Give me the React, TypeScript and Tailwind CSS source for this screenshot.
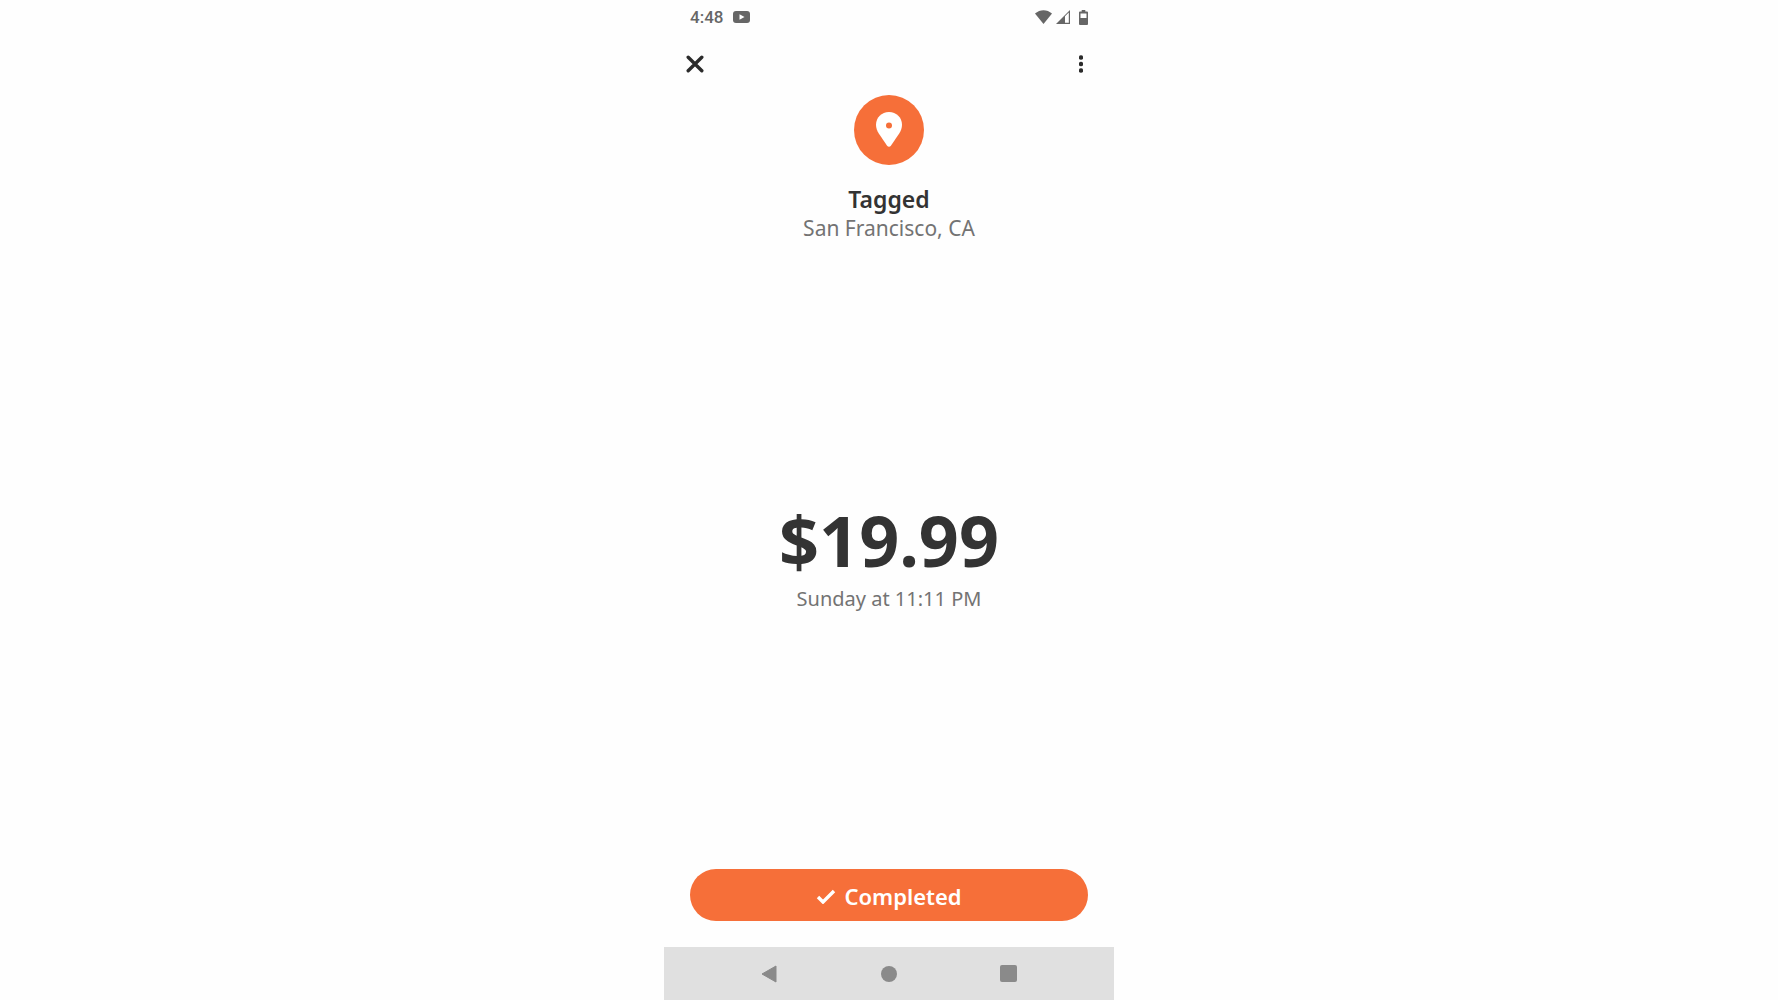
import React from "react";

function StatusBar() {
  return (
    <div className="flex h-8 items-center justify-between px-[26px] pt-0.5 text-[#666666]">
      <div className="flex items-center gap-2.5">
        <span className="font-['Roboto',sans-serif] text-[17px] leading-5 font-medium">
          4:48
        </span>
        <svg width="17" height="12" viewBox="0 0 17 12" aria-hidden="true">
          <rect width="17" height="12" rx="3" fill="currentColor" />
          <path d="M6.5 3.2v5.6L11.5 6z" fill="#fff" />
        </svg>
      </div>
      <div className="flex items-center">
        <svg width="17" height="14" viewBox="0 0 17 14" aria-hidden="true">
          <path d="M0 3.6C5 -.9 12 -.9 17 3.6L8.5 14z" fill="currentColor" />
        </svg>
        <svg
          className="ml-1"
          width="15"
          height="14"
          viewBox="0 0 15 14"
          aria-hidden="true"
        >
          <path d="M0 14 14 0v14z" fill="currentColor" />
          <path d="M9 6.2 12.8 2.6v10.2H9z" fill="#fff" />
        </svg>
        <svg
          className="ml-2"
          width="9"
          height="15"
          viewBox="0 0 9 15"
          aria-hidden="true"
        >
          <path
            d="M2.7 0h3.6v1.5H8a1 1 0 0 1 1 1V14a1 1 0 0 1-1 1H1a1 1 0 0 1-1-1V2.5a1 1 0 0 1 1-1h1.7z"
            fill="currentColor"
          />
          <path d="M1.5 3.5h6V8h-6z" fill="#fff" />
        </svg>
      </div>
    </div>
  );
}

function TopBar() {
  return (
    <div className="flex h-[63px] items-center justify-between px-5 text-[#2b2b2b]">
      <button type="button" aria-label="Close" className="p-0.5">
        <svg width="18" height="18" viewBox="0 0 18 18">
          <path
            d="M2.2 2.2l13.6 13.6M15.8 2.2 2.2 15.8"
            stroke="currentColor"
            strokeWidth="3.4"
            strokeLinecap="round"
          />
        </svg>
      </button>
      <button type="button" aria-label="More options" className="px-[11px]">
        <svg width="4" height="18" viewBox="0 0 4 18">
          <circle cx="2" cy="2.5" r="2.2" fill="currentColor" />
          <circle cx="2" cy="9" r="2.2" fill="currentColor" />
          <circle cx="2" cy="15.5" r="2.2" fill="currentColor" />
        </svg>
      </button>
    </div>
  );
}

function PinIcon() {
  return (
    <svg width="26" height="35" viewBox="0 0 26 35" aria-hidden="true">
      <path
        d="M13 0C5.6 0 0 5.6 0 12.8c0 3.3 1.1 6 2.8 8.7l8.3 12.3c1 1.4 2.8 1.4 3.8 0l8.3-12.3c1.7-2.7 2.8-5.4 2.8-8.7C26 5.6 20.4 0 13 0z"
        fill="#fff"
      />
      <circle cx="13" cy="13.5" r="3" fill="#f66f39" />
    </svg>
  );
}

function NavBar() {
  return (
    <nav className="flex h-[53px] items-center justify-between bg-[#e0e0e0] px-[97px] text-[#8a8a8a]">
      <button type="button" aria-label="Back">
        <svg width="16" height="18" viewBox="0 0 16 18">
          <path
            d="M15 1v16L1 9z"
            fill="currentColor"
            stroke="currentColor"
            strokeLinejoin="round"
          />
        </svg>
      </button>
      <button
        type="button"
        aria-label="Home"
        className="size-4 rounded-full bg-[#8a8a8a]"
      />
      <button
        type="button"
        aria-label="Recent apps"
        className="size-[17px] rounded-xs bg-[#8a8a8a]"
      />
    </nav>
  );
}

export default function App() {
  return (
    <div className="min-h-screen bg-[#fefefe] font-['Noto_Sans',sans-serif]">
      <div className="mx-auto flex min-h-screen w-full max-w-[450px] flex-col">
        <StatusBar />
        <TopBar />
        <header className="flex flex-col items-center">
          <div className="flex size-[70px] items-center justify-center rounded-full bg-[#f66f39] pb-0.5">
            <PinIcon />
          </div>
          <h1 className="mt-5 text-[23px] leading-7 font-semibold text-[#333333]">
            Tagged
          </h1>
          <p className="text-[21px] leading-[30px] text-[#737373]">
            San Francisco, CA
          </p>
        </header>
        <main className="flex flex-1 flex-col items-center justify-center pb-0.5">
          <p className="text-[70px] leading-[88px] font-bold text-[#333333]">
            $19.99
          </p>
          <p className="text-xl leading-[30px] text-[#737373]">
            Sunday at 11:11 PM
          </p>
        </main>
        <div className="px-[26px] pb-[26px]">
          <button
            type="button"
            className="flex h-[52px] w-full items-center justify-center gap-2 rounded-full bg-[#f66f39] pt-0.5 text-[22px] font-semibold text-white"
          >
            <svg width="20" height="15" viewBox="0 0 20 15" aria-hidden="true">
              <path
                d="M2 8l5 5L18 2"
                fill="none"
                stroke="currentColor"
                strokeWidth="3.4"
              />
            </svg>
            Completed
          </button>
        </div>
        <NavBar />
      </div>
    </div>
  );
}
